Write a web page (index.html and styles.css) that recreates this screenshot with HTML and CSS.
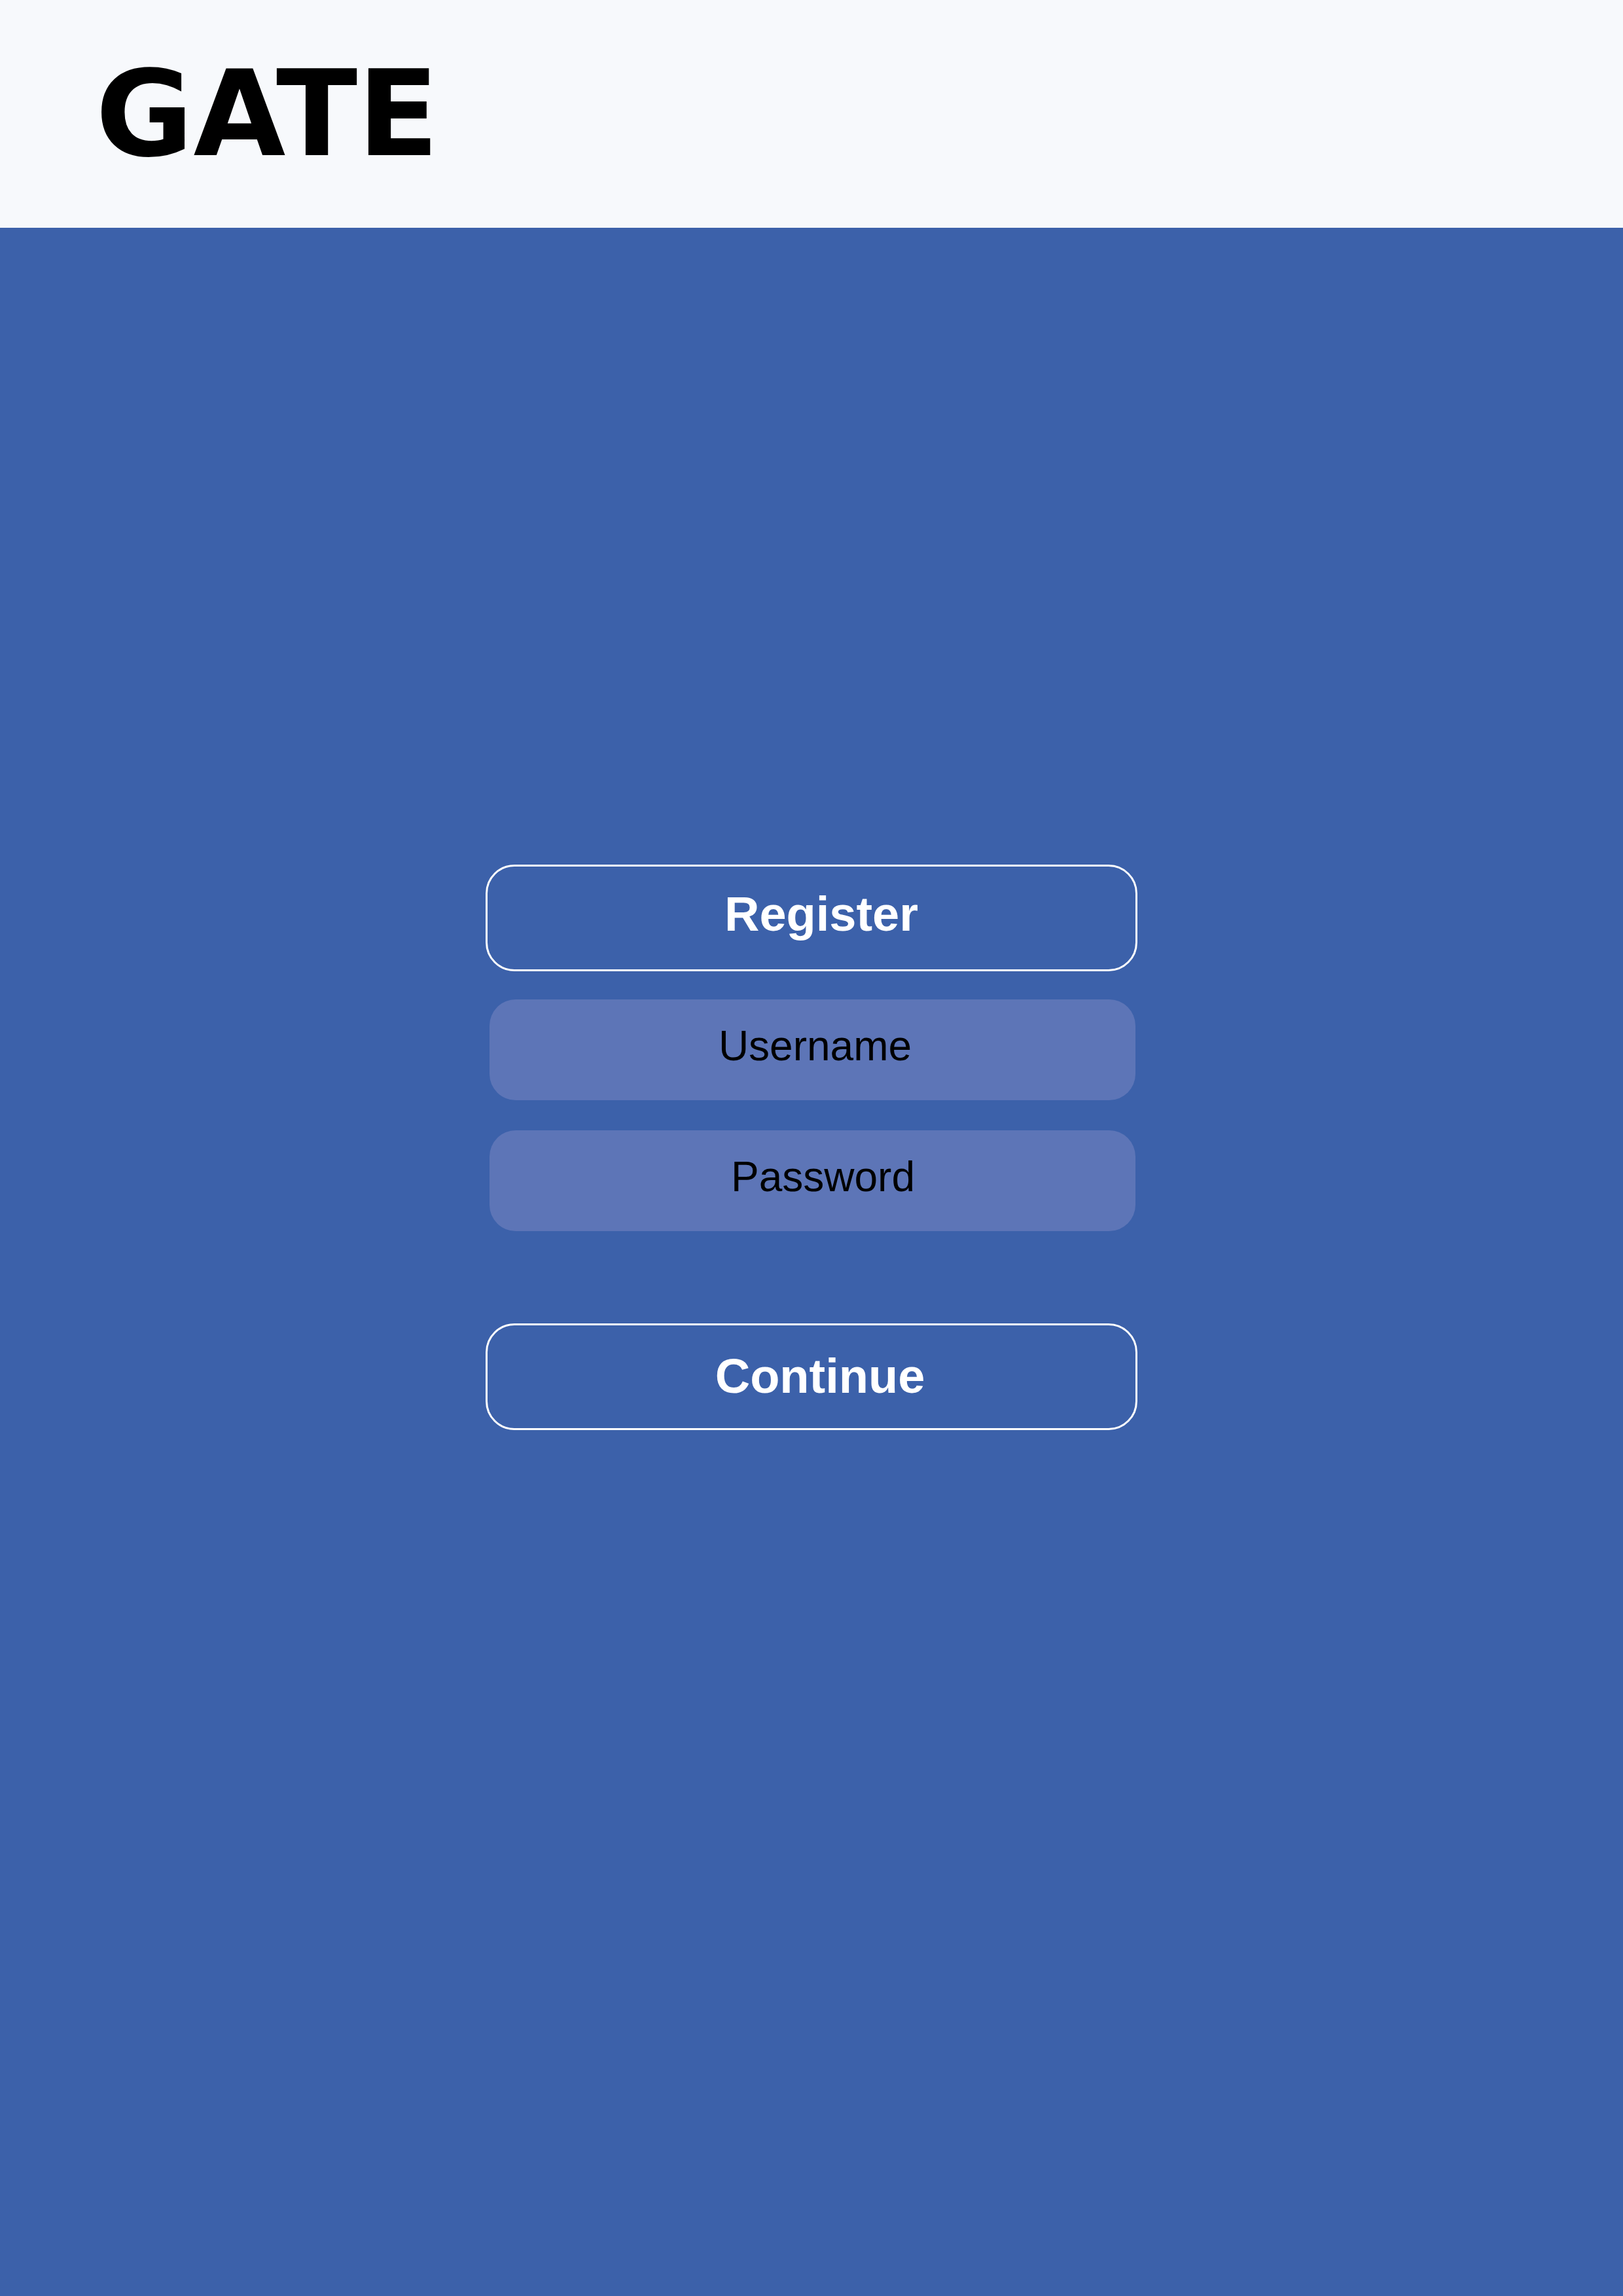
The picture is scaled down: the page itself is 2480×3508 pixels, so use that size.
FILE: index.html
```html
<!DOCTYPE html>
<html lang="en">
<head>
<meta charset="utf-8">
<title>GATE</title>
<link rel="stylesheet" href="styles.css">
</head>
<body>
<header class="topbar">
  <h1 class="logo">GATE</h1>
</header>
<main class="stage">
  <form class="auth">
    <button type="button" class="btn btn-register">Register</button>
    <input class="field" type="text" placeholder="Username">
    <input class="field field-password" type="password" placeholder="Password">
    <button type="button" class="btn btn-continue">Continue</button>
  </form>
</main>
</body>
</html>
```

FILE: styles.css
```css
html, body {
  margin: 0;
  padding: 0;
}
body {
  width: 2480px;
  min-height: 3508px;
  display: flex;
  flex-direction: column;
  background: #3c61aa;
  font-family: "Liberation Sans", Arial, sans-serif;
}
.topbar {
  height: 348px;
  background: #f7f9fc;
  display: flex;
  align-items: center;
  padding-left: 146px;
  box-sizing: border-box;
}
.logo {
  margin: 0;
  font-family: "DejaVu Sans", sans-serif;
  font-weight: bold;
  font-size: 182px;
  line-height: normal;
  color: #000;
}
.stage {
  flex: 1;
  display: flex;
  justify-content: center;
  padding-top: 973px;
}
.auth {
  width: 996px;
  display: flex;
  flex-direction: column;
}
.btn {
  height: 163px;
  box-sizing: border-box;
  border: 3px solid #ffffff;
  border-radius: 44px;
  background: transparent;
  color: #ffffff;
  font-family: "Liberation Sans", Arial, sans-serif;
  font-weight: bold;
  font-size: 74px;
  padding: 0 0 0 30px;
  margin: 0;
}
.btn-register {
  padding-bottom: 12px;
}
.btn-continue {
  margin-top: 141px;
  padding-bottom: 2px;
  padding-left: 26px;
}
.field {
  height: 154px;
  margin: 43px 3px 0 6px;
  box-sizing: border-box;
  border: none;
  border-radius: 40px;
  background: #5d75b7;
  color: #000;
  font-family: "Liberation Sans", Arial, sans-serif;
  font-size: 64px;
  text-align: center;
  padding: 0 0 12px 8px;
  outline: none;
}
.field-password {
  margin-top: 46px;
  padding-left: 32px;
}
.field::placeholder {
  color: #000;
  opacity: 1;
}
```
